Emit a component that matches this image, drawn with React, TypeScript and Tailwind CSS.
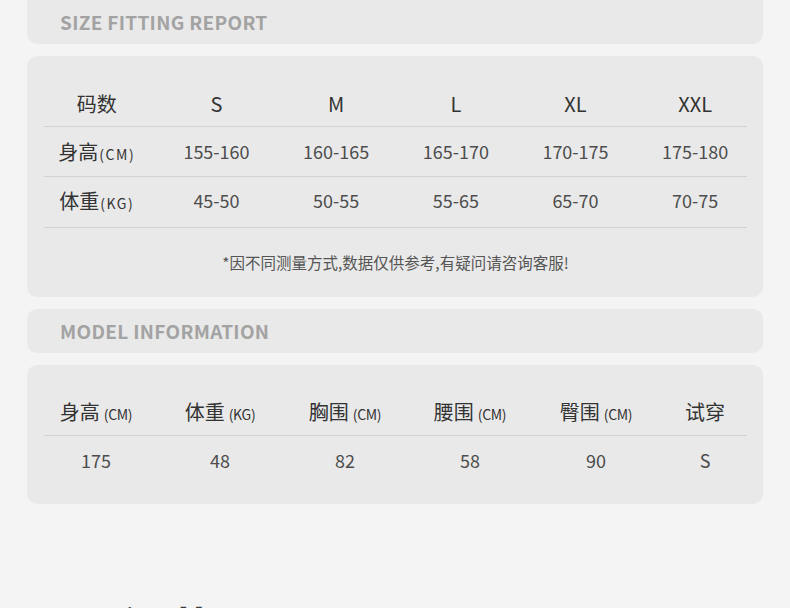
import React from "react";

const font = "font-['Noto_Sans_CJK_SC','Noto_Sans',sans-serif]";

function SectionTitle({ text, top }: { text: string; top?: boolean }) {
  return (
    <div
      className={`h-[44px] bg-[#e9e9e9] flex items-center pl-[33px] ${
        top ? "rounded-b-[10px]" : "rounded-[10px]"
      }`}
    >
      <span className="text-[19px] font-bold tracking-[0.3px] text-[#a3a3a3] leading-none mt-[-2px]">
        {text}
      </span>
    </div>
  );
}

const sizes = ["S", "M", "L", "XL", "XXL"];
const heights = ["155-160", "160-165", "165-170", "170-175", "175-180"];
const weights = ["45-50", "50-55", "55-65", "65-70", "70-75"];

function Row1({
  label,
  unit,
  values,
  h,
  big,
}: {
  label: string;
  unit?: string;
  values: string[];
  h: string;
  big?: boolean;
}) {
  return (
    <div className={`border-b border-[#d2d2d2] ${h}`}>
      <div className="ml-[-7px] w-[718px] grid grid-cols-6 h-full items-center">
        <div className="flex items-baseline justify-center text-[#333]">
          <span className="text-[20px]">{label}</span>
          {unit && <span className="text-[14px] tracking-[1.6px] ml-[1px]">{unit}</span>}
        </div>
        {values.map((v, i) => (
          <div
            key={i}
            className={`text-center ${big ? "text-[20px] text-[#333]" : "text-[18px] text-[#4d4d4d]"}`}
          >
            {v}
          </div>
        ))}
      </div>
    </div>
  );
}

const modelHeads: [string, string][] = [
  ["身高", "(CM)"],
  ["体重", "(KG)"],
  ["胸围", "(CM)"],
  ["腰围", "(CM)"],
  ["臀围", "(CM)"],
  ["试穿", ""],
];
const modelVals = ["175", "48", "82", "58", "90", "S"];

export default function App() {
  return (
    <div className={`min-h-[608px] bg-[#f4f4f4] px-[27px] ${font}`}>
      <SectionTitle text="SIZE FITTING REPORT" top />

      <div className="mt-[12px] h-[241px] rounded-[10px] bg-[#e9e9e9] pl-[17px] pr-[16px] pt-[25px]">
        <Row1 label="码数" values={sizes} h="h-[46px]" big />
        <Row1 label="身高" unit="(CM)" values={heights} h="h-[50px]" />
        <Row1 label="体重" unit="(KG)" values={weights} h="h-[51px] pb-[3px]" />
        <div className="mt-[22px] text-center text-[15.5px] leading-[24px] text-[#555]">
          *因不同测量方式,数据仅供参考,有疑问请咨询客服!
        </div>
      </div>

      <div className="mt-[12px]">
        <SectionTitle text="MODEL INFORMATION" />
      </div>

      <div className="mt-[12px] h-[139px] rounded-[10px] bg-[#e9e9e9] pl-[17px] pr-[16px] pt-[24px]">
        <div className="h-[47px] border-b border-[#d2d2d2]">
          <div className="ml-[-10px] w-[716px] grid grid-cols-[124px_124px_126px_124px_128px_90px] h-full items-center pb-[1px]">
            {modelHeads.map(([a, b], i) => (
              <div key={i} className="flex items-baseline justify-center text-[#333]">
                <span className="text-[20px]">{a}</span>
                {b && <span className="text-[14px] ml-[4px] tracking-[-0.3px]">{b}</span>}
              </div>
            ))}
          </div>
        </div>
        <div className="h-[50px]">
          <div className="ml-[-10px] w-[716px] grid grid-cols-[124px_124px_126px_124px_128px_90px] h-full items-center pb-[1px]">
            {modelVals.map((v, i) => (
              <div key={i} className="text-center text-[18px] text-[#4d4d4d]">
                {v}
              </div>
            ))}
          </div>
        </div>
      </div>

      <div className="pt-[100px] pl-[92px] text-[44px] font-bold leading-none text-[#3a3a3a] tracking-[6px]">
        细节展示
      </div>
    </div>
  );
}
